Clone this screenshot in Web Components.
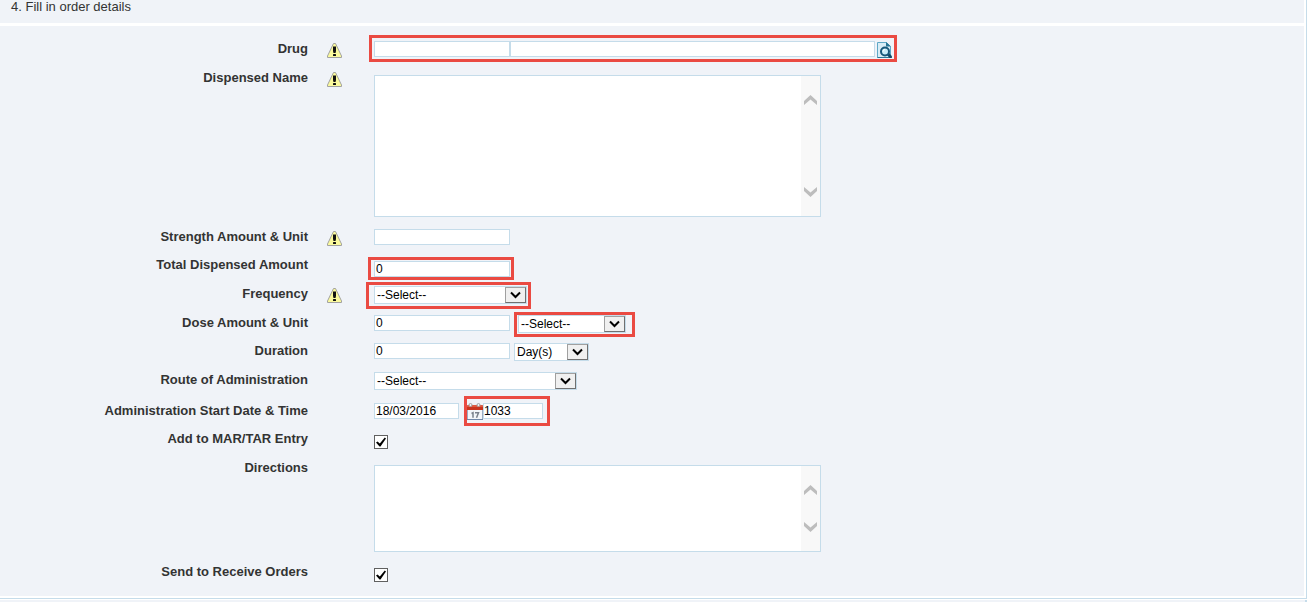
<!DOCTYPE html>
<html lang="en">
<head>
<meta charset="utf-8">
<title>Order details</title>
<style>
  body {
    margin: 0;
    background: #fff;
    color: #333;
    font: 13px/16px "Liberation Sans", Arial, sans-serif;
    --panel: #f0f3f8;
    --line: #c5dcea;
    --mark: #ea4a42;
  }
</style>
</head>
<body>
<order-page></order-page>

<script>
  class BaseElement extends HTMLElement {
    constructor() {
      super();
      this.attachShadow({ mode: 'open' });
      this.render();
    }
  }

  class WarningIcon extends BaseElement {
    render() {
      this.shadowRoot.innerHTML = `
        <style>
          :host { display: block; width: 15px; height: 15px; }
          svg { display: block; }
        </style>
        <svg width="15" height="15" viewBox="0 0 15 15" aria-hidden="true">
          <path d="M6.500.5h2L14.500 13v1.500H.5V13z" fill="#fbfa9c" stroke="#a2a2a0" stroke-linejoin="round"/>
          <path d="M6 3.500h3V8l-.5 2h-2L6 8z" fill="#111"/>
          <rect x="6" y="11" width="3" height="2" rx=".5" fill="#111"/>
        </svg>
      `;
    }
  }

  class LookupIcon extends BaseElement {
    render() {
      this.shadowRoot.innerHTML = `
        <style>
          :host { display: block; width: 15px; height: 17px; }
          button { display: block; padding: 0; border: 0; background: none; }
          svg { display: block; }
        </style>
        <button type="button" aria-label="Search drug">
          <svg width="15" height="17" viewBox="0 0 15 17">
            <path d="M.5 1.500h9l4 4v11H.5z" fill="#d9edf6" stroke="#5fa8c6"/>
            <path d="M.5 16.500h13" stroke="#2c7697"/>
            <path d="M9 1v4.500h5z" fill="#277494"/>
            <path d="M11 13l3.500 4" stroke="#124b68" stroke-width="3"/>
            <circle cx="8" cy="10.500" r="4" fill="#c9ecf8" stroke="#17587a" stroke-width="2"/>
            <path d="M6 10.500a2 2 0 0 1 2-2" fill="none" stroke="#fff"/>
          </svg>
        </button>
      `;
    }
  }

  class CalendarIcon extends BaseElement {
    render() {
      this.shadowRoot.innerHTML = `
        <style>
          :host { display: block; width: 16px; height: 17px; }
          button { display: block; padding: 0; border: 0; background: none; }
          svg { display: block; }
        </style>
        <button type="button" aria-label="Pick a date">
          <svg width="16" height="17" viewBox="0 0 16 17">
            <rect x=".5" y="2.500" width="15" height="14" fill="#f3f6fa" stroke="#9aabc2"/>
            <path d="M0 16.500h16" stroke="#7087a8"/>
            <rect x="0" y="2" width="16" height="5" rx="1" fill="#e05a40"/>
            <rect x="0" y="4" width="16" height="3" fill="#c9351f"/>
            <circle cx="3.500" cy="2" r="1.500" fill="#f2f2f2" stroke="#a0a0a0"/>
            <circle cx="11.500" cy="2" r="1.500" fill="#f2f2f2" stroke="#a0a0a0"/>
            <path d="M4.500 10.500l1.500-.8v5M8 9.800h3.500l-2 4.900" fill="none" stroke="#7a818c" stroke-width="1.500"/>
          </svg>
        </button>
      `;
    }
  }

  // red frame round the fields the user has to look at
  class MarkBox extends BaseElement {
    render() {
      this.shadowRoot.innerHTML = `
        <style>
          :host { display: flex; position: relative; width: max-content; }
          :host::after {
            content: "";
            position: absolute;
            inset: var(--reach, -5px);
            border: 3px solid var(--mark);
            pointer-events: none;
          }
        </style>
        <slot></slot>
      `;
    }
  }

  class SelectBox extends BaseElement {
    render() {
      this.shadowRoot.innerHTML = `
        <style>
          :host {
            display: inline-grid;
            box-sizing: border-box;
            height: 18px;
            border: 1px solid var(--line);
            background: #fff;
          }
          ::slotted(select), .arrow { grid-area: 1 / 1; }
          .arrow {
            box-sizing: border-box;
            justify-self: end;
            display: grid;
            place-items: center;
            width: 21px;
            height: 16px;
            border: 1px solid #707070;
            border-top-color: #a0a0a0;
            border-left-color: #a0a0a0;
            background: #f0f0f0;
            pointer-events: none;
          }
          svg { display: block; }
        </style>
        <slot></slot>
        <span class="arrow">
          <svg width="11" height="8" viewBox="0 0 11 8"><path d="M1 1.500L5.500 6 10 1.500" fill="none" stroke="#000" stroke-width="2"/></svg>
        </span>
      `;
    }
  }

  class ScrollBox extends BaseElement {
    render() {
      this.shadowRoot.innerHTML = `
        <style>
          :host {
            display: flex;
            box-sizing: border-box;
            width: 447px;
            border: 1px solid var(--line);
            background: #fff;
          }
          .track {
            box-sizing: border-box;
            display: flex;
            flex-direction: column;
            justify-content: space-between;
            align-items: center;
            width: 19px;
            padding: 19px 0;
            background: #f8f8f8;
          }
          svg { display: block; }
        </style>
        <slot></slot>
        <div class="track">
          <svg width="13" height="10" viewBox="0 0 13 10"><path d="M0 6L6.500 0 13 6v4L6.500 4.500 0 10z" fill="#bdbdbd"/></svg>
          <svg width="13" height="10" viewBox="0 0 13 10"><path d="M0 4l6.500 6L13 4V0L6.500 5.500 0 0z" fill="#bdbdbd"/></svg>
        </div>
      `;
    }
  }

  class FormRow extends BaseElement {
    render() {
      this.shadowRoot.innerHTML = `
        <style>
          :host {
            display: grid;
            grid-template-columns: 308px 15px 1fr;
            column-gap: 19px;
            min-height: 29px;
            align-items: start;
          }
          :host([tight]) { min-height: 28px; }
          :host([loose]) { min-height: 31px; }
          .label { text-align: right; font-weight: bold; line-height: 18px; }
          .icon { padding-top: 3px; }
          .field {
            display: flex;
            align-items: flex-start;
            gap: var(--field-gap, 4px);
            padding: 1px 0 0 13px;
          }
          :host([low]) .field { padding-top: 5px; }
          :host([area]) .field { padding-top: 6px; }
          :host([area]) { padding-bottom: 11px; }
        </style>
        <div class="label"><slot name="label"></slot></div>
        <div class="icon"><slot name="icon"></slot></div>
        <div class="field"><slot></slot></div>
      `;
    }
  }

  class OrderForm extends BaseElement {
    render() {
      this.shadowRoot.innerHTML = `
        <style>
          :host { display: block; background: var(--panel); padding: 14px 0 4px; }
          form { margin: 0; }
          input, select, textarea {
            box-sizing: border-box;
            margin: 0;
            font: 12px/14px "Liberation Sans", Arial, sans-serif;
            color: #000;
            background: #fff;
            border-radius: 0;
            outline: 0;
          }
          input[type=text] {
            width: 136px;
            height: 16px;
            padding: 0 1px;
            border: 1px solid var(--line);
          }
          input.wide { width: 365px; }
          input.date { width: 85px; }
          input.time { width: 60px; padding: 0; }
          select {
            appearance: none;
            height: 16px;
            padding: 0 2px;
            border: 0;
          }
          textarea {
            display: block;
            flex: 1;
            height: 140px;
            padding: 2px;
            border: 0;
            resize: none;
            overflow: hidden;
          }
          #directions { height: 85px; }
          input[type=checkbox] {
            appearance: none;
            display: grid;
            place-items: center;
            width: 14px;
            height: 14px;
            border: 1px solid #606060;
          }
          input[type=checkbox]:checked::before {
            content: "";
            width: 10px;
            height: 10px;
            background: #000;
            clip-path: polygon(0 55%, 15% 45%, 38% 65%, 88% 5%, 100% 15%, 45% 95%, 35% 95%);
          }
          lookup-icon { margin-left: 2px; }
          .spaced { --field-gap: 8px; }
          .drug { --reach: -6px -5px -4px -5px; }
          .total { --reach: -4px -4px -3px -6px; }
          .frequency { --reach: -4px -4px -5px -8px; }
          .unit { --reach: -3px -9px -4px -4px; }
          .start { --reach: -7px -7px -6px -3px; }
          .w153 { width: 153px; }
          .w108 { width: 108px; }
          .w75 { width: 75px; }
          .w203 { width: 203px; }
        </style>
        <form>
          <form-row>
            <label slot="label" for="drug">Drug</label>
            <warning-icon slot="icon"></warning-icon>
            <mark-box class="drug">
              <input type="text" id="drug">
              <input type="text" class="wide" aria-label="Drug name">
              <lookup-icon></lookup-icon>
            </mark-box>
          </form-row>
          <form-row area>
            <label slot="label" for="dispensed">Dispensed Name</label>
            <warning-icon slot="icon"></warning-icon>
            <scroll-box><textarea id="dispensed"></textarea></scroll-box>
          </form-row>
          <form-row tight>
            <label slot="label" for="strength">Strength Amount &amp; Unit</label>
            <warning-icon slot="icon"></warning-icon>
            <input type="text" id="strength">
          </form-row>
          <form-row low>
            <label slot="label" for="total">Total Dispensed Amount</label>
            <mark-box class="total"><input type="text" id="total" value="0"></mark-box>
          </form-row>
          <form-row>
            <label slot="label" for="frequency">Frequency</label>
            <warning-icon slot="icon"></warning-icon>
            <mark-box class="frequency">
              <select-box class="w153"><select id="frequency"><option>--Select--</option></select></select-box>
            </mark-box>
          </form-row>
          <form-row tight class="spaced">
            <label slot="label" for="dose">Dose Amount &amp; Unit</label>
            <input type="text" id="dose" value="0">
            <mark-box class="unit">
              <select-box class="w108"><select aria-label="Dose unit"><option>--Select--</option></select></select-box>
            </mark-box>
          </form-row>
          <form-row>
            <label slot="label" for="duration">Duration</label>
            <input type="text" id="duration" value="0">
            <select-box class="w75"><select aria-label="Duration unit"><option>Day(s)</option></select></select-box>
          </form-row>
          <form-row loose>
            <label slot="label" for="route">Route of Administration</label>
            <select-box class="w203"><select id="route"><option>--Select--</option></select></select-box>
          </form-row>
          <form-row tight class="spaced">
            <label slot="label" for="start">Administration Start Date &amp; Time</label>
            <input type="text" class="date" id="start" value="18/03/2016">
            <mark-box class="start">
              <calendar-icon></calendar-icon>
              <input type="text" class="time" aria-label="Start time" value="1033">
            </mark-box>
          </form-row>
          <form-row low>
            <label slot="label" for="mar">Add to MAR/TAR Entry</label>
            <input type="checkbox" id="mar" checked>
          </form-row>
          <form-row area>
            <label slot="label" for="directions">Directions</label>
            <scroll-box><textarea id="directions"></textarea></scroll-box>
          </form-row>
          <form-row low>
            <label slot="label" for="send">Send to Receive Orders</label>
            <input type="checkbox" id="send" checked>
          </form-row>
        </form>
      `;
    }
  }

  class OrderPage extends BaseElement {
    render() {
      this.shadowRoot.innerHTML = `
        <style>
          :host { display: block; margin-right: 4px; }
          .section {
            display: flex;
            flex-direction: column;
            gap: 3px;
            padding: 0 2px 2px 0;
            border: solid var(--line);
            border-width: 0 1px 1px 0;
          }
          h2 {
            margin: 0;
            padding: 0 0 9px 11px;
            background: var(--panel);
            font-size: 13px;
            line-height: 14px;
            font-weight: normal;
          }
          .next {
            height: 2px;
            margin-top: 1px;
            border-right: 2px solid var(--line);
            background: var(--panel);
          }
        </style>
        <div class="section">
          <h2>4. Fill in order details</h2>
          <order-form></order-form>
        </div>
        <div class="next"></div>
      `;
    }
  }

  customElements.define('warning-icon', WarningIcon);
  customElements.define('lookup-icon', LookupIcon);
  customElements.define('calendar-icon', CalendarIcon);
  customElements.define('mark-box', MarkBox);
  customElements.define('select-box', SelectBox);
  customElements.define('scroll-box', ScrollBox);
  customElements.define('form-row', FormRow);
  customElements.define('order-form', OrderForm);
  customElements.define('order-page', OrderPage);
</script>
</body>
</html>
